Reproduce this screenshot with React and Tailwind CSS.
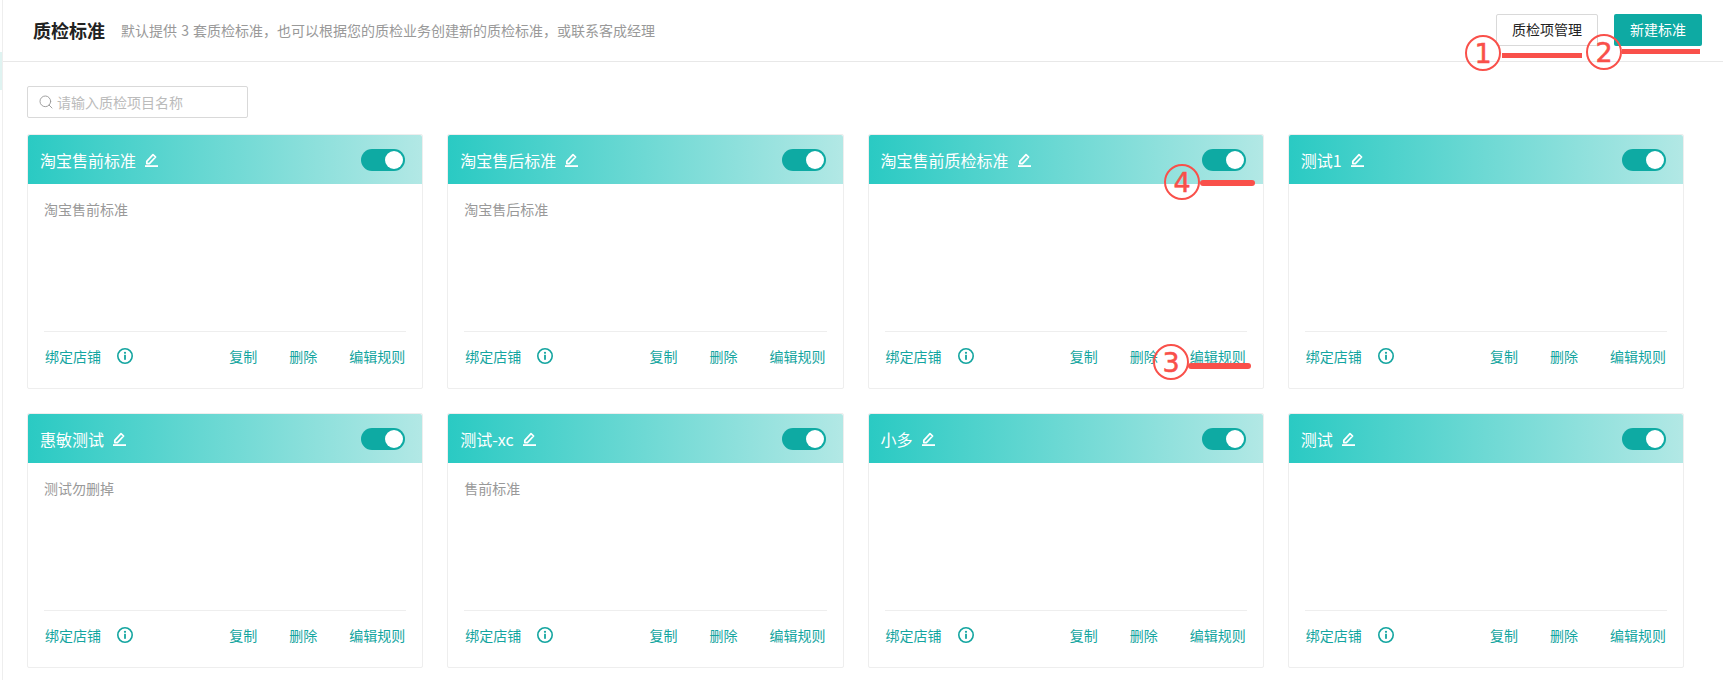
import React from "react";
import { Search } from "lucide-react";

const cards = [
  { title: "淘宝售前标准", desc: "淘宝售前标准" },
  { title: "淘宝售后标准", desc: "淘宝售后标准" },
  { title: "淘宝售前质检标准", desc: "" },
  { title: "测试1", desc: "" },
  { title: "惠敏测试", desc: "测试勿删掉" },
  { title: "测试-xc", desc: "售前标准" },
  { title: "小多", desc: "" },
  { title: "测试", desc: "" },
];

const PencilIcon = () => (
  <svg width="13" height="14" viewBox="0 0 13 14" fill="none" className="ml-[9px] shrink-0">
    <path d="M1.8 10.6V8.4L8 1.6l2.6 2.4-6.2 6.6z" stroke="#fff" strokeWidth="1.7" strokeLinejoin="round" />
    <rect x="0" y="12.2" width="13" height="1.8" fill="#fff" />
  </svg>
);

const InfoIcon = () => (
  <svg width="16" height="16" viewBox="0 0 16 16" fill="none" className="ml-4 shrink-0">
    <circle cx="8" cy="8" r="7.2" stroke="#14a5a0" strokeWidth="1.6" />
    <circle cx="8" cy="4.8" r="1.1" fill="#14a5a0" />
    <rect x="7.1" y="6.8" width="1.8" height="5" fill="#14a5a0" />
  </svg>
);

const Card = ({ title, desc }) => (
  <div className="h-[255px] flex flex-col border border-[#eeeeee] rounded-[2px] bg-white">
    <div className="h-[49px] shrink-0 flex items-center justify-between pl-3 pr-[17px] rounded-t-[2px] bg-[linear-gradient(90deg,#2acac3,#b2e8e5)]">
      <div className="flex items-center">
        <span className="text-base text-white">{title}</span>
        <PencilIcon />
      </div>
      <div className="w-11 h-[22px] rounded-full bg-[#0eaaa3] flex items-center justify-end pr-0.5">
        <div className="w-[18px] h-[18px] rounded-full bg-white"></div>
      </div>
    </div>
    <div className="flex-1 flex flex-col px-4">
      <p className="flex-1 pt-[15px] text-sm leading-5 text-[#999999]">{desc}</p>
      <div className="h-[57px] shrink-0 border-t border-[#eeeeee] pt-[14px] flex items-start justify-between text-sm leading-5 text-[#14a5a0]">
        <div className="flex items-center pl-px">
          <span>绑定店铺</span>
          <InfoIcon />
        </div>
        <div className="flex items-center gap-8 pr-px">
          <span>复制</span>
          <span>删除</span>
          <span>编辑规则</span>
        </div>
      </div>
    </div>
  </div>
);

// red hand-drawn markers sitting on top of the screenshot
const Marker = ({ n, className }) => (
  <div className={"absolute w-9 h-9 rounded-full border-[2.5px] border-[#f9504a] flex items-center justify-center font-['DejaVu_Sans',sans-serif] text-[27px] leading-none text-[#f9504a] [-webkit-text-stroke:0.5px_#f9504a] " + className}>
    {n}
  </div>
);

export default function App() {
  return (
    <div className="relative w-[1723px] h-[680px] overflow-hidden bg-white font-['Noto_Sans_CJK_SC','Noto_Sans',sans-serif]">
      <div className="absolute left-0 top-[52px] w-[2px] h-[38px] bg-[#dff3f1]"></div>
      <div className="ml-[2px] h-full border-l border-[#eeeeee]">
        <header className="h-[62px] border-b border-[#e8e8e8] flex items-center justify-between pl-[30px] pr-[21px]">
          <div className="flex items-center pb-0.5">
            <h1 className="text-lg font-bold text-[#222222]">质检标准</h1>
            <span className="ml-4 text-sm text-[#999999] [word-spacing:1px]">默认提供 3 套质检标准，也可以根据您的质检业务创建新的质检标准，或联系客成经理</span>
          </div>
          <div className="flex items-center gap-4 -mt-[2px]">
            <button className="w-[102px] h-8 pb-0.5 border border-[#d9d9d9] rounded-[2px] bg-white text-sm text-[#222222]">质检项管理</button>
            <button className="w-[88px] h-8 pb-0.5 rounded-[2px] bg-[#0eaaa3] text-sm text-white">新建标准</button>
          </div>
        </header>
        <div className="pl-[24px] pr-[39px] pt-6">
          <div className="w-[221px] h-8 border border-[#d9d9d9] rounded-[2px] flex items-center pl-[10px]">
            <Search size={16} strokeWidth={1.4} className="text-[#999999]" />
            <span className="ml-[3px] text-sm text-[#bbbbbb]">请输入质检项目名称</span>
          </div>
          <div className="mt-4 grid grid-cols-4 gap-6">
            {cards.map((c) => (
              <Card key={c.title} title={c.title} desc={c.desc} />
            ))}
          </div>
        </div>
      </div>
      <Marker n="1" className="left-[1465px] top-[35px]" />
      <div className="absolute left-[1502px] top-[53px] w-[80px] h-[5px] bg-[#f9504a]"></div>
      <Marker n="2" className="left-[1586px] top-[34px]" />
      <div className="absolute left-[1622px] top-[49px] w-[78px] h-[5px] bg-[#f9504a]"></div>
      <Marker n="3" className="left-[1153px] top-[344px]" />
      <div className="absolute left-[1188px] top-[363px] w-[63px] h-[6px] rounded-full bg-[#f9504a]"></div>
      <Marker n="4" className="left-[1164px] top-[164px]" />
      <div className="absolute left-[1200px] top-[180px] w-[55px] h-[6px] rounded-full bg-[#f9504a]"></div>
    </div>
  );
}
